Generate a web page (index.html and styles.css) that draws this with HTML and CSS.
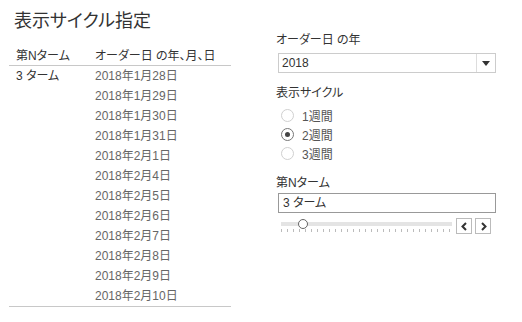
FILE: index.html
```html
<!DOCTYPE html>
<html lang="ja">
<head>
    <meta charset="UTF-8">
    <title>表示サイクル指定</title>
    <link rel="stylesheet" href="styles.css">
</head>
<body>
    <div class="page">
        <div class="sheet">
            <h1 class="title">表示サイクル指定</h1>
            <div class="cross">
                <div class="cross-head">
                    <div class="col-turn">第Nターム</div>
                    <div class="col-date">オーダー日 の年、月、日</div>
                </div>
                <div class="cross-body">
                    <div class="col-turn">3 ターム</div>
                    <div class="col-date">
                        <div class="date">2018年1月28日</div>
                        <div class="date">2018年1月29日</div>
                        <div class="date">2018年1月30日</div>
                        <div class="date">2018年1月31日</div>
                        <div class="date">2018年2月1日</div>
                        <div class="date">2018年2月4日</div>
                        <div class="date">2018年2月5日</div>
                        <div class="date">2018年2月6日</div>
                        <div class="date">2018年2月7日</div>
                        <div class="date">2018年2月8日</div>
                        <div class="date">2018年2月9日</div>
                        <div class="date">2018年2月10日</div>
                    </div>
                </div>
            </div>
        </div>

        <div class="filters">
            <div class="label">オーダー日 の年</div>
            <div class="select">
                <span class="select-value">2018</span>
                <span class="select-arrow"><span class="tri"></span></span>
            </div>

            <div class="label">表示サイクル</div>
            <div class="radios">
                <div class="radio"><span class="dot"></span>1週間</div>
                <div class="radio checked"><span class="dot"></span>2週間</div>
                <div class="radio"><span class="dot"></span>3週間</div>
            </div>

            <div class="label label-turn">第Nターム</div>
            <div class="textbox">3 ターム</div>
            <div class="slider-row">
                <div class="slider">
                    <div class="track"></div>
                    <div class="knob"></div>
                    <div class="ticks"></div>
                </div>
                <div class="step">
                    <svg width="9" height="9" viewBox="0 0 9 9"><path d="M6 1 L2.5 4.5 L6 8" fill="none" stroke="#333" stroke-width="2"/></svg>
                </div>
                <div class="step">
                    <svg width="9" height="9" viewBox="0 0 9 9"><path d="M3 1 L6.5 4.5 L3 8" fill="none" stroke="#333" stroke-width="2"/></svg>
                </div>
            </div>
        </div>
    </div>
</body>
</html>
```

FILE: styles.css
```css
body {
    margin: 0;
    background: #fff;
    font-family: "Liberation Sans", "Noto Sans CJK JP", sans-serif;
    font-size: 12px;
    font-feature-settings: "palt";
    color: #333;
}

.page {
    display: flex;
}

.sheet {
    width: 222px;
    margin-left: 9px;
    padding-top: 9px;
}

.title {
    margin: 0 0 14px 5px;
    font-size: 18px;
    line-height: 24px;
    font-weight: normal;
    color: #333;
}

.cross {
    border-bottom: 1px solid #c8c8c8;
}

.cross-head {
    display: flex;
    height: 18px;
    line-height: 18px;
    border-bottom: 1px solid #c8c8c8;
}

.cross-body {
    display: flex;
}

.col-turn {
    width: 79px;
    padding-left: 7px;
}

.col-date {
    flex: 1;
}

.cross-body .col-turn {
    line-height: 20px;
}

.date {
    height: 20px;
    line-height: 20px;
    color: #666;
    font-feature-settings: normal;
}

.filters {
    width: 220px;
    margin-left: 45px;
    padding-top: 32px;
}

.label {
    line-height: 16px;
    margin-bottom: 5px;
    color: #333;
}

.select {
    display: flex;
    box-sizing: border-box;
    height: 20px;
    margin: 0 0 12px 2px;
    border: 1px solid #ccc;
    line-height: 18px;
}

.select-value {
    flex: 1;
    padding-left: 3px;
}

.select-arrow {
    width: 18px;
    border-left: 1px solid #ddd;
    display: flex;
    align-items: center;
    justify-content: center;
}

.tri {
    width: 0;
    height: 0;
    border-left: 4px solid transparent;
    border-right: 4px solid transparent;
    border-top: 5px solid #333;
}

.radios {
    margin-bottom: 12px;
}

.radio {
    display: flex;
    align-items: center;
    height: 19px;
    color: #555;
}

.dot {
    box-sizing: border-box;
    width: 13px;
    height: 13px;
    margin: 0 8px 0 5px;
    border: 1px solid #d0d0d0;
    border-radius: 50%;
    display: flex;
    align-items: center;
    justify-content: center;
}

.radio.checked .dot {
    border-color: #777;
}

.radio.checked .dot::after {
    content: "";
    width: 5px;
    height: 5px;
    border-radius: 50%;
    background: #444;
}

.label-turn {
    margin-bottom: 2px;
}

.textbox {
    box-sizing: border-box;
    height: 20px;
    margin-left: 2px;
    padding-left: 4px;
    border: 1px solid #999;
    line-height: 18px;
}

.slider-row {
    display: flex;
    align-items: center;
    margin: 5px 0 0 2px;
}

.slider {
    position: relative;
    width: 178px;
    height: 16px;
}

.track {
    position: absolute;
    left: 3px;
    right: 4px;
    top: 4px;
    height: 4px;
    background: #e4e4e4;
}

.knob {
    position: absolute;
    left: 20px;
    top: 1px;
    box-sizing: border-box;
    width: 10px;
    height: 10px;
    border: 1px solid #666;
    border-radius: 50%;
    background: #fff;
}

.ticks {
    position: absolute;
    left: 3px;
    right: 4px;
    top: 11px;
    height: 3px;
    background: repeating-linear-gradient(to right, #bbb 0 1px, transparent 1px 6px);
}

.step {
    box-sizing: border-box;
    width: 16px;
    height: 16px;
    margin-right: 3px;
    border: 1px solid #bbb;
    display: flex;
    align-items: center;
    justify-content: center;
}
```
